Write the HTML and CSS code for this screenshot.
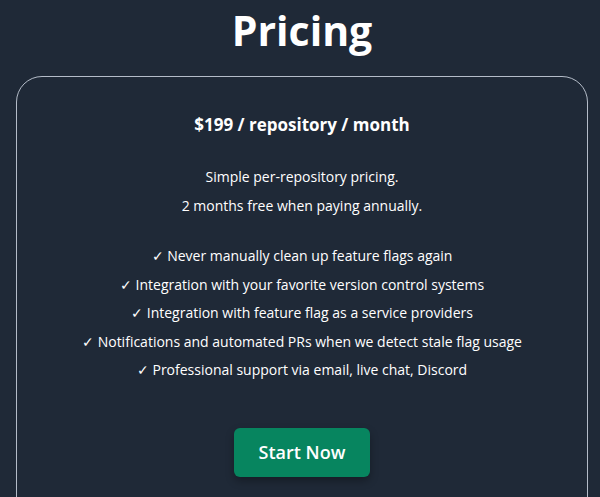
FILE: index.html
```html
<!DOCTYPE html>
<html>
<head>
<meta charset="utf-8">
<link rel="stylesheet" href="styles.css">
</head>
<body>
<main class="page">
  <h1 class="title">Pricing</h1>
  <section class="card">
    <h2 class="price">$199 / repository / month</h2>
    <div class="intro">
      <p>Simple per-repository pricing.</p>
      <p>2 months free when paying annually.</p>
    </div>
    <ul class="features">
      <li>✓ Never manually clean up feature flags again</li>
      <li>✓ Integration with your favorite version control systems</li>
      <li>✓ Integration with feature flag as a service providers</li>
      <li>✓ Notifications and automated PRs when we detect stale flag usage</li>
      <li>✓ Professional support via email, live chat, Discord</li>
    </ul>
    <a class="cta" href="#">Start Now</a>
  </section>
</main>
</body>
</html>
```
FILE: styles.css
```css
html, body {
  margin: 0;
  padding: 0;
  background: #1f2937;
  color: #ffffff;
  font-family: "Open Sans", "Liberation Sans", sans-serif;
}
.page {
  padding: 0 12px 0 16px;
}
.title {
  margin: 0;
  padding-top: 0;
  font-size: 41px;
  line-height: 60px;
  font-weight: 700;
  text-align: center;
}
.card {
  margin-top: 16px;
  border: 1.5px solid #b4bcc8;
  border-radius: 26px;
  padding: 35px 20px 40px;
  display: flex;
  flex-direction: column;
  align-items: center;
  text-align: center;
  min-height: 500px;
}
.price {
  margin: 0;
  font-size: 17px;
  line-height: 26px;
  font-weight: 700;
}
.intro {
  margin-top: 25px;
}
.intro p, .features li {
  margin: 0;
  font-size: 14px;
  line-height: 28.5px;
}
.features {
  list-style: none;
  margin: 22px 0 0;
  padding: 0;
}
.cta {
  margin-top: 43px;
  display: inline-block;
  background: #07855f;
  color: #ffffff;
  text-decoration: none;
  font-size: 18px;
  font-weight: 600;
  line-height: 49px;
  padding: 0 25px;
  border-radius: 6px;
  box-shadow: 0 4px 8px rgba(0,0,0,0.3);
}
```
